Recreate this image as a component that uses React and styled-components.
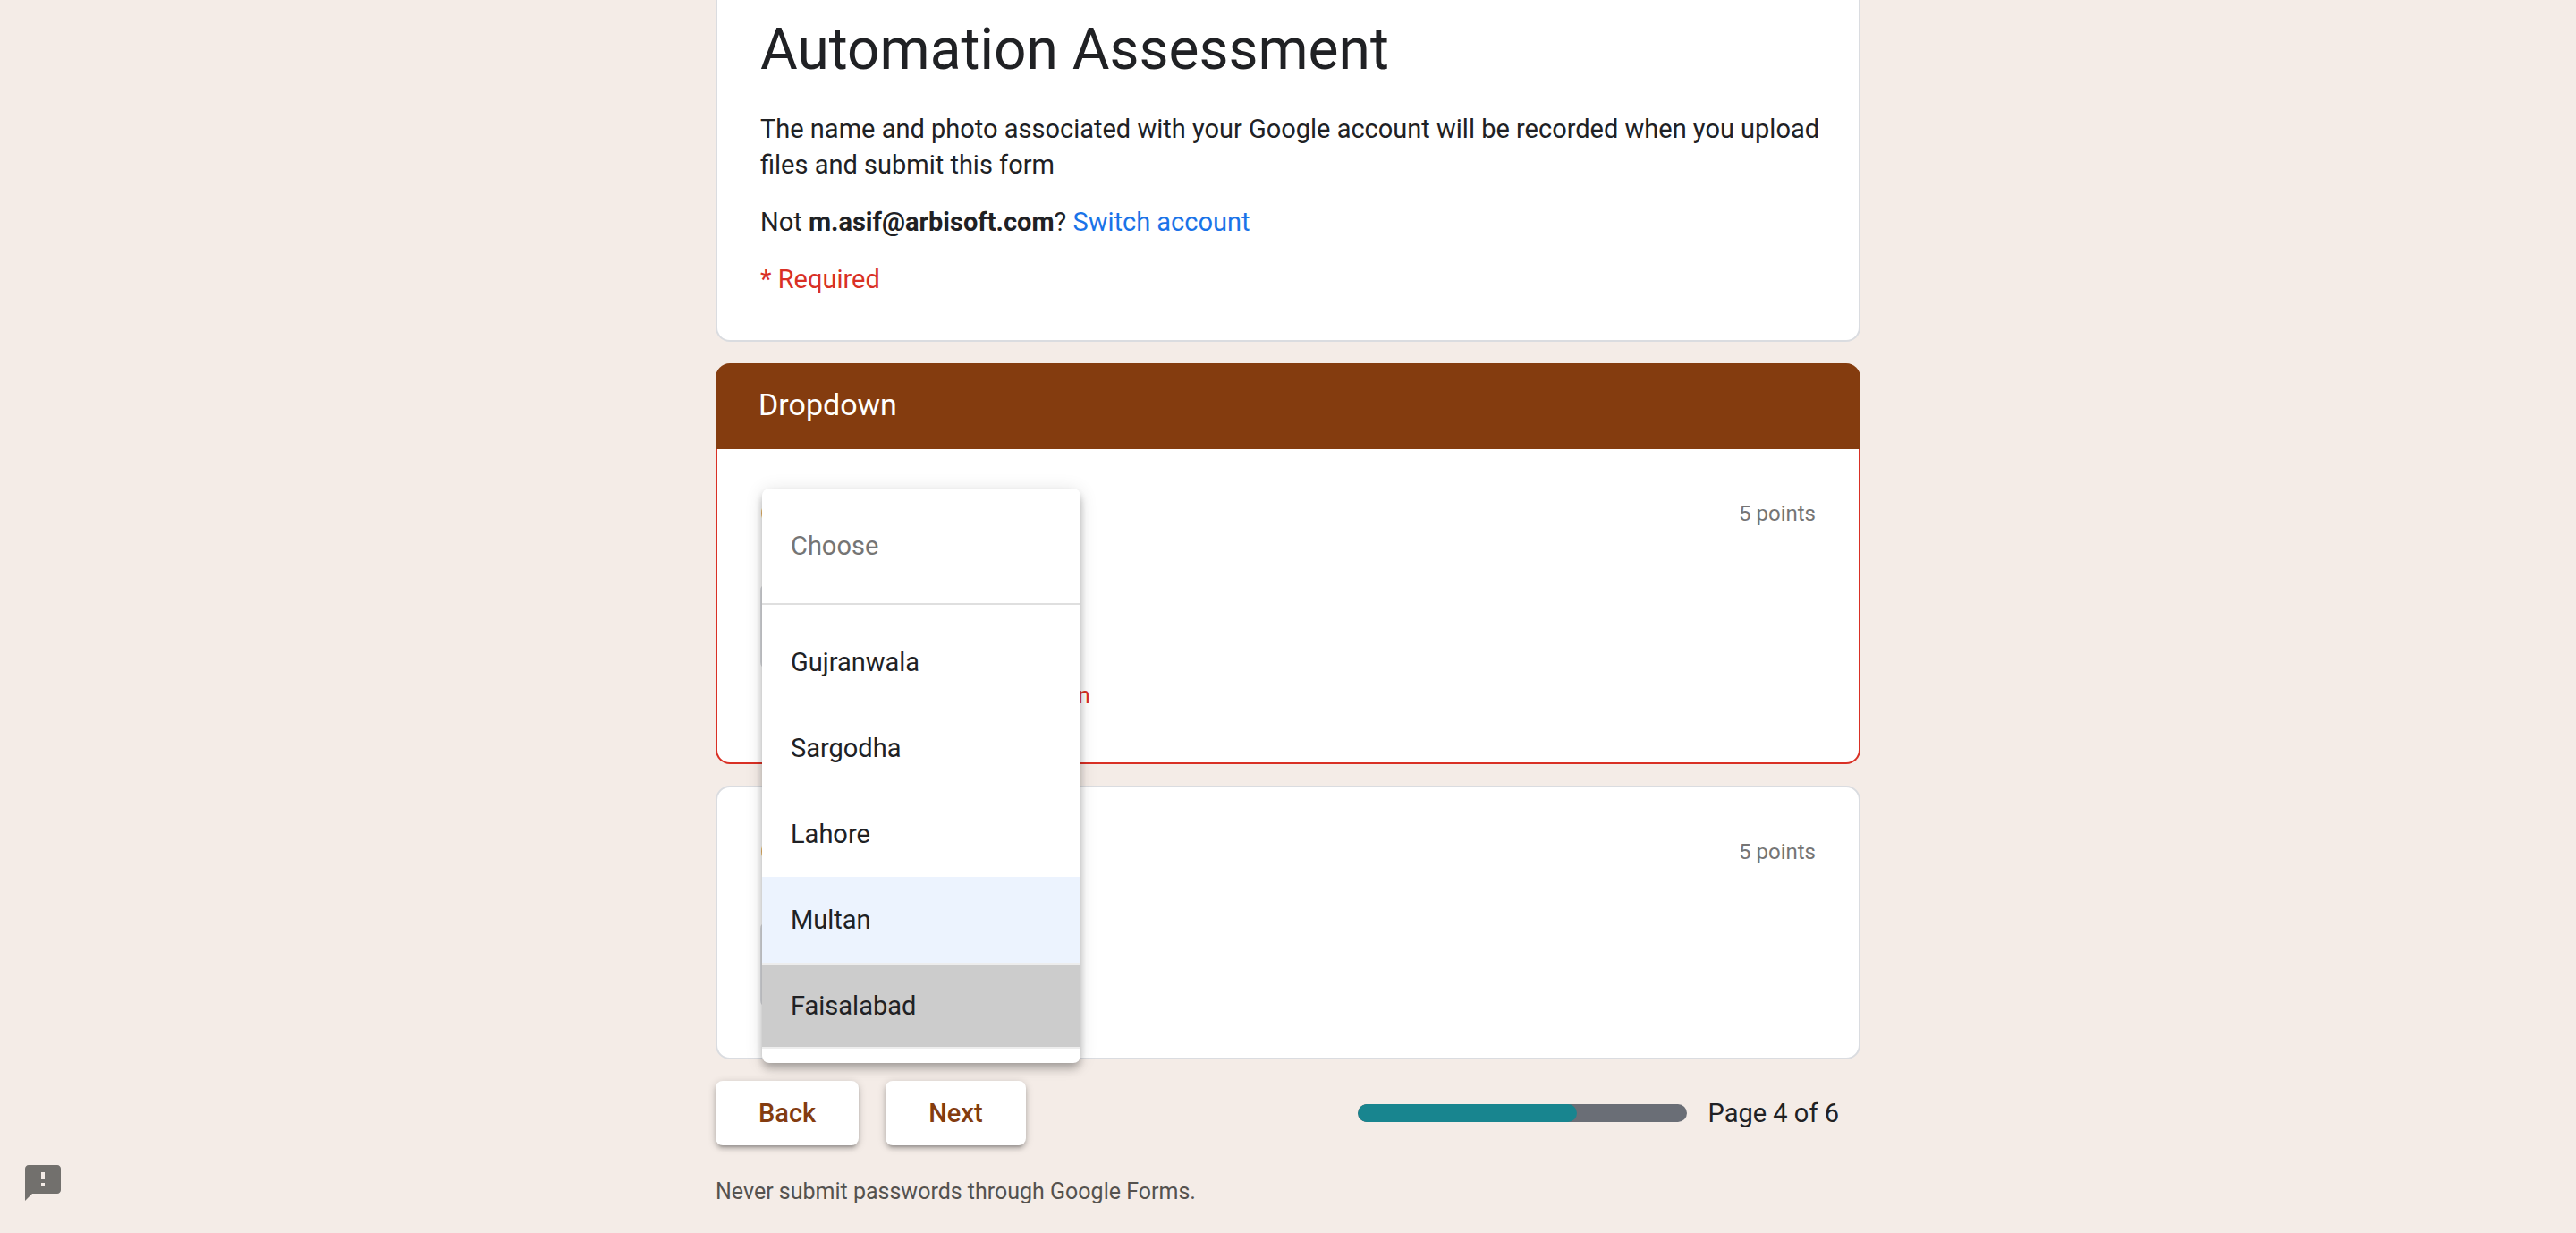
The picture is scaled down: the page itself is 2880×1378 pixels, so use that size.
import React from "react";
import styled, { createGlobalStyle, css } from "styled-components";

const color = {
  page: "#f4ece7",
  brand: "#843c0f",
  text: "#202124",
  muted: "#757575",
  line: "#dadce0",
  link: "#1a73e8",
  error: "#d93025",
};

const GlobalStyle = createGlobalStyle`
  *, *::before, *::after { box-sizing: border-box; }
  body {
    margin: 0;
    background: ${color.page};
    color: ${color.text};
    font-family: Roboto, "Liberation Sans", sans-serif;
    font-size: 29px;
    line-height: 40px;
  }
  h1, h2, h3, p, ul { margin: 0; padding: 0; font-weight: 400; }
  button, select { font: inherit; color: inherit; }
`;

const Page = styled.main`
  width: 100%;
  max-width: 1280px;
  margin: 0 auto;
`;

const Form = styled.form`
  display: flex;
  flex-direction: column;
  gap: 24px;
`;

const Card = styled.section`
  background: #fff;
  border: 2px solid ${(p) => (p.$invalid ? color.error : color.line)};
  border-radius: 16px;
  padding: 52px 48px 56px;
  ${(p) =>
    p.$attached &&
    css`
      border-top: 0;
      border-top-left-radius: 0;
      border-top-right-radius: 0;
    `}
`;

const IntroCard = styled(Card)`
  display: flex;
  flex-direction: column;
  gap: 24px;
  padding: 16px 40px 48px 48px;
`;

const Title = styled.h1`
  font-size: 64px;
  line-height: 80px;
  margin-bottom: 4px;
`;

const Required = styled.p`
  color: ${color.error};
`;

const Link = styled.a`
  color: ${color.link};
  text-decoration: none;
`;

const SectionHeader = styled.h2`
  padding: 26px 48px 30px;
  border-radius: 16px 16px 0 0;
  background: ${color.brand};
  color: #fff;
  font-size: 34px;
`;

const QuestionHead = styled.div`
  display: flex;
  justify-content: space-between;
  height: 40px;
  margin-bottom: 58px;
`;

const QuestionLabel = styled.label`
  font-size: 29px;
`;

const Points = styled.span`
  color: ${color.muted};
  font-size: 24px;
`;

const Field = styled.div`
  position: relative;
  width: 356px;
`;

const Select = styled.select`
  display: block;
  width: 100%;
  height: 96px;
  padding: 0 32px;
  appearance: none;
  background: #fff;
  border: 2px solid ${color.line};
  border-radius: 8px;
`;

const Menu = styled.div`
  position: absolute;
  z-index: 2;
  top: -106px;
  left: 2px;
  width: 356px;
  padding: 16px 0;
  background: #fff;
  border-radius: 8px;
  box-shadow: 0 4px 8px -2px rgba(0, 0, 0, 0.2), 0 8px 10px rgba(0, 0, 0, 0.14),
    0 2px 20px rgba(0, 0, 0, 0.12);
`;

const optionFill = {
  selected: css`
    background: #ecf3fe;
  `,
  pressed: css`
    background: #ccc;
    border-color: #ededed;
  `,
};

const Option = styled.button`
  display: block;
  width: 100%;
  height: 96px;
  padding: 0 32px;
  border: solid transparent;
  border-width: 2px 0;
  background: transparent;
  text-align: left;
  color: ${(p) => (p.$placeholder ? color.muted : color.text)};
  ${(p) => optionFill[p.$state]}
`;

const Divider = styled.hr`
  margin: 16px 0;
  border: 0;
  border-top: 2px solid #dfdfdf;
`;

const ErrorText = styled.p`
  display: flex;
  align-items: center;
  gap: 28px;
  margin-top: 14px;
  margin-bottom: 2px;
  color: ${color.error};
  font-size: 25px;
  line-height: 32px;
`;

const Footer = styled.footer`
  display: flex;
  align-items: center;
  justify-content: space-between;
  padding-right: 24px;
`;

const Group = styled.div`
  display: flex;
  align-items: center;
  gap: ${(p) => p.$gap}px;
`;

const NavButton = styled.button`
  height: 72px;
  padding: 0 48px;
  border: 0;
  border-radius: 8px;
  background: #fff;
  color: ${color.brand};
  font-size: 29px;
  font-weight: 500;
  box-shadow: 0 4px 4px rgba(0, 0, 0, 0.14), 0 6px 2px -4px rgba(0, 0, 0, 0.12),
    0 2px 10px rgba(0, 0, 0, 0.2);
`;

const Track = styled.div`
  width: 368px;
  height: 20px;
  border-radius: 10px;
  background: #6a6e76;
  overflow: hidden;
`;

const Fill = styled.div`
  height: 100%;
  border-radius: 10px;
  background: #18858f;
`;

const Notice = styled.p`
  margin-top: 36px;
  color: #55524f;
  font-size: 25px;
  line-height: 32px;
`;

const FeedbackButton = styled.button`
  position: fixed;
  left: 24px;
  bottom: 32px;
  width: 48px;
  height: 48px;
  padding: 0;
  border: 0;
  background: none;
  color: #72706d;

  svg {
    display: block;
  }
`;

const cities = ["Gujranwala", "Sargodha", "Lahore", "Multan", "Faisalabad"];
const optionState = { Multan: "selected", Faisalabad: "pressed" };

const page = 4;
const pageCount = 6;

function AlertIcon() {
  return (
    <svg width="48" height="32" viewBox="0 0 36 24" fill="currentColor" aria-hidden="true">
      <path d="M12 2a10 10 0 1 0 0 20 10 10 0 0 0 0-20zm1 15h-2v-2h2v2zm0-4h-2V7h2v6z" />
    </svg>
  );
}

function FeedbackIcon() {
  return (
    <svg width="48" height="48" viewBox="0 0 24 24" fill="currentColor" aria-hidden="true">
      <path d="M20 2H4c-1.1 0-1.99.9-1.99 2L2 22l4-4h14c1.1 0 2-.9 2-2V4c0-1.1-.9-2-2-2zm-7 12h-2v-2h2v2zm0-4h-2V6h2v4z" />
    </svg>
  );
}

function Question({ id, points, invalid, attached, open }) {
  return (
    <Card $invalid={invalid} $attached={attached}>
      <QuestionHead>
        <QuestionLabel htmlFor={id}>City</QuestionLabel>
        <Points>{points} points</Points>
      </QuestionHead>
      <Field>
        <Select id={id} defaultValue="">
          <option value="">Choose</option>
          {cities.map((city) => (
            <option key={city}>{city}</option>
          ))}
        </Select>
        {open && (
          <Menu role="listbox" aria-label="City">
            <Option type="button" role="option" $placeholder>
              Choose
            </Option>
            <Divider />
            {cities.map((city) => (
              <Option
                key={city}
                type="button"
                role="option"
                aria-selected={optionState[city] === "selected"}
                $state={optionState[city]}
              >
                {city}
              </Option>
            ))}
          </Menu>
        )}
      </Field>
      {invalid && (
        <ErrorText>
          <AlertIcon />
          This is a required question
        </ErrorText>
      )}
    </Card>
  );
}

export default function App() {
  return (
    <>
      <GlobalStyle />
      <Page>
        <Form onSubmit={(event) => event.preventDefault()}>
          <IntroCard $attached>
            <Title>Automation Assessment</Title>
            <p>
              The name and photo associated with your Google account will be recorded when you
              upload files and submit this form
            </p>
            <p>
              Not <b>m.asif@arbisoft.com</b>? <Link href="#switch">Switch account</Link>
            </p>
            <Required>* Required</Required>
          </IntroCard>

          <div>
            <SectionHeader>Dropdown</SectionHeader>
            <Question id="city-one" points={5} invalid attached open />
          </div>

          <Question id="city-two" points={5} />

          <Footer>
            <Group $gap={30}>
              <NavButton type="button">Back</NavButton>
              <NavButton type="submit">Next</NavButton>
            </Group>
            <Group $gap={24}>
              <Track
                role="progressbar"
                aria-label="Form progress"
                aria-valuenow={page}
                aria-valuemax={pageCount}
              >
                <Fill style={{ width: `${(page / pageCount) * 100}%` }} />
              </Track>
              <span>
                Page {page} of {pageCount}
              </span>
            </Group>
          </Footer>
        </Form>
        <Notice>Never submit passwords through Google Forms.</Notice>
      </Page>
      <FeedbackButton type="button" aria-label="Report a problem">
        <FeedbackIcon />
      </FeedbackButton>
    </>
  );
}
